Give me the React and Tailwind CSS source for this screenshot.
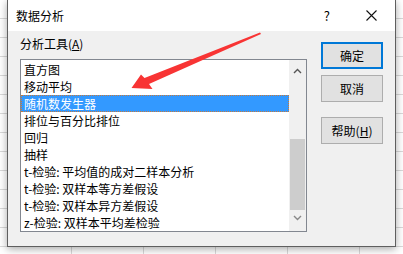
import React from "react";

const items = [
  "直方图",
  "移动平均",
  "随机数发生器",
  "排位与百分比排位",
  "回归",
  "抽样",
  "t-检验: 平均值的成对二样本分析",
  "t-检验: 双样本等方差假设",
  "t-检验: 双样本异方差假设",
  "z-检验: 双样本平均差检验",
];

const font = { fontFamily: '"Noto Sans CJK SC", "Noto Sans", sans-serif' };

function Btn({ children, focused }) {
  return (
    <div
      className={
        "w-[62px] h-[27px] flex items-center justify-center text-[12px] text-black bg-[#e1e1e1] " +
        (focused ? "border-2 border-[#0078d7]" : "border border-[#adadad]")
      }
    >
      {children}
    </div>
  );
}

export default function App() {
  return (
    <div
      className="relative w-[403px] h-[254px] overflow-hidden bg-white bg-[repeating-linear-gradient(to_bottom,transparent_0_18px,#d9d9d9_18px_19px),repeating-linear-gradient(to_right,transparent_0_71px,#d9d9d9_71px_72px)]"
      style={font}
    >
      <div className="px-[7px]">
        <div className="w-[389px] h-[247px] flex flex-col border-x border-b border-[#5f5f5f] shadow-[0_2px_8px_rgba(0,0,0,0.35)]">
          {/* title bar */}
          <div className="h-[31px] bg-white flex items-center pl-[8px] pr-[18px] text-[12px] text-black">
            <span>数据分析</span>
            <span className="ml-auto text-[13px]">?</span>
            <svg className="ml-[36px]" width="11" height="11" viewBox="0 0 11 11">
              <path d="M0.5 0.5 L10.5 10.5 M10.5 0.5 L0.5 10.5" stroke="#111" strokeWidth="1.1" />
            </svg>
          </div>

          {/* body */}
          <div className="flex-1 bg-[#f0f0f0] flex pl-[12px]">
            <div className="flex flex-col">
              <div className="mt-[4px] h-[17px] leading-[17px] text-[12px] text-black">
                分析工具(<span className="underline">A</span>)
              </div>
              <div className="mt-[7px] w-[287px] h-[173px] border border-[#828790] bg-white flex">
                <div className="flex-1 pt-[1px] overflow-hidden">
                  {items.map((t, i) => (
                    <div
                      key={t}
                      className={
                        "h-[17px] leading-[17px] pl-[3px] text-[12px] whitespace-nowrap " +
                        (i === 2
                          ? "bg-[#3399ff] text-white outline-1 outline-dotted outline-[#c77a3a] -outline-offset-1"
                          : "text-black")
                      }
                    >
                      {t}
                    </div>
                  ))}
                </div>
                <div className="w-[17px] bg-[#f0f0f0] flex flex-col items-center">
                  <svg className="mt-[8px]" width="9" height="6" viewBox="0 0 9 6">
                    <path d="M1 5 L4.5 1.5 L8 5" stroke="#555" strokeWidth="1.4" fill="none" />
                  </svg>
                  <div className="mt-[65px] w-[15px] h-[71px] bg-[#cdcdcd]" />
                  <svg className="mt-[5px]" width="9" height="6" viewBox="0 0 9 6">
                    <path d="M1 1 L4.5 4.5 L8 1" stroke="#888" strokeWidth="1.4" fill="none" />
                  </svg>
                </div>
              </div>
            </div>

            <div className="ml-[14px] pt-[11px] flex flex-col">
              <Btn focused>确定</Btn>
              <div className="mt-[6px]">
                <Btn>取消</Btn>
              </div>
              <div className="mt-[15px]">
                <Btn>
                  帮助(<span className="underline">H</span>)
                </Btn>
              </div>
            </div>
          </div>
        </div>
      </div>

      {/* red annotation arrow */}
      <svg className="absolute left-0 top-0 pointer-events-none" width="403" height="254" viewBox="0 0 403 254">
        <polygon
          points="131.5,88 141,74.5 144.5,78 260,32.5 261,34 149,84 152.5,89"
          fill="#f83434"
        />
      </svg>
    </div>
  );
}
